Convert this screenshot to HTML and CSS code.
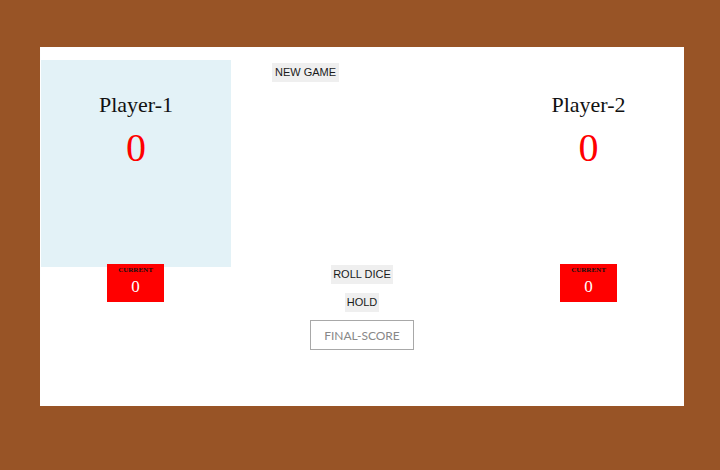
FILE: index.html
```html
<!DOCTYPE html>
<html>
<head>
<meta charset="utf-8">
<link rel="stylesheet" href="styles.css">
</head>
<body>
<div class="game">
  <section class="player active">
    <h2 class="name">Player-1</h2>
    <div class="score">0</div>
  </section>
  <div class="top-center">
    <button class="btn new-game">NEW GAME</button>
  </div>
  <section class="player">
    <h2 class="name">Player-2</h2>
    <div class="score">0</div>
  </section>

  <div class="current-wrap">
    <div class="current">
      <p class="current-label">CURRENT</p>
      <p class="current-score">0</p>
    </div>
  </div>
  <div class="controls">
    <button class="btn">ROLL DICE</button>
    <button class="btn">HOLD</button>
    <input class="final-score" type="text" placeholder="FINAL-SCORE">
  </div>
  <div class="current-wrap">
    <div class="current">
      <p class="current-label">CURRENT</p>
      <p class="current-score">0</p>
    </div>
  </div>
</div>
</body>
</html>
```

FILE: styles.css
```css
html, body {
  margin: 0;
  padding: 0;
}
body {
  background: #985426;
  width: 720px;
  height: 470px;
  overflow: hidden;
}
.game {
  box-sizing: border-box;
  margin: 47px 0 0 40px;
  width: 644px;
  height: 359px;
  background: #ffffff;
  padding-top: 13px;
  display: grid;
  grid-template-columns: 191px 1fr 191px;
  grid-template-rows: 207px auto;
  font-family: "Liberation Serif", "Times New Roman", serif;
}
.player {
  display: flex;
  flex-direction: column;
  align-items: center;
  padding-top: 32px;
}
.player.active {
  background: #e3f2f7;
  margin-left: 1px;
}
.name {
  margin: 0;
  font-weight: normal;
  font-size: 22px;
  line-height: 25px;
  color: #111;
}
.score {
  margin-top: 9px;
  font-size: 40px;
  line-height: 44px;
  color: #ff0000;
}
.top-center {
  padding: 2px 0 0 41px;
}
.btn {
  font-family: "Liberation Sans", Arial, sans-serif;
  font-size: 11px;
  color: #1a1a1a;
  background: #efefef;
  border: none;
  padding: 3px 2px;
  line-height: 13px;
  margin: 0;
  cursor: pointer;
}
.new-game {
  padding: 3px 3px;
}
.current-wrap {
  display: flex;
  justify-content: center;
  margin-top: -3px;
}
.current {
  width: 57px;
  height: 38px;
  background: #ff0000;
  text-align: center;
}
.current-label {
  margin: 2px 0 0;
  font-size: 7px;
  font-weight: bold;
  line-height: 8px;
  color: #111;
}
.current-score {
  margin: 3px 0 0;
  font-size: 17px;
  line-height: 20px;
  color: #ffffff;
}
.controls {
  display: flex;
  flex-direction: column;
  align-items: center;
  gap: 9px;
  margin-top: -2px;
}
.controls .final-score {
  margin-top: -1px;
}
.final-score {
  box-sizing: border-box;
  width: 104px;
  height: 30px;
  border: 1px solid #a8a8a8;
  padding: 0;
  text-align: center;
  font-family: Lato, "Liberation Sans", sans-serif;
  font-size: 12px;
  color: #555;
  outline: none;
}
.final-score::placeholder {
  color: #888;
}
```
